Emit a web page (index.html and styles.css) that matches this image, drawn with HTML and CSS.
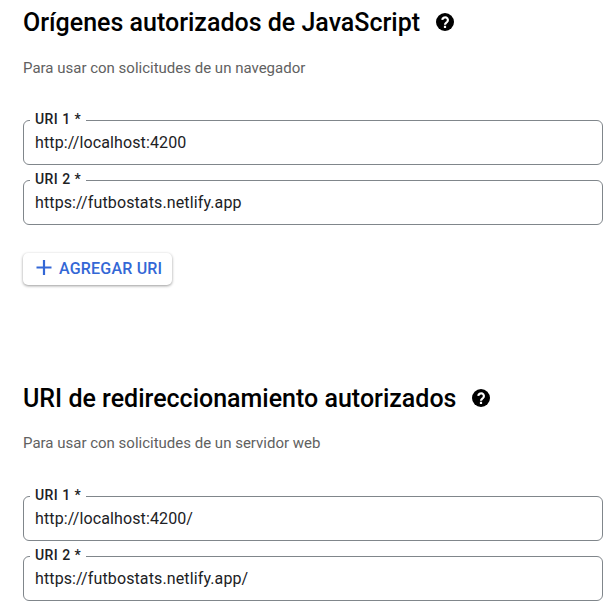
FILE: index.html
```html
<!DOCTYPE html>
<html lang="es">
<head>
<meta charset="utf-8">
<title>Credenciales</title>
<link rel="stylesheet" href="styles.css">
</head>
<body>
<section class="block">
  <h2 class="title"><span>Orígenes autorizados de JavaScript</span>
    <svg class="help" viewBox="0 0 18 18"><circle cx="9" cy="9" r="9"/><path d="M6.3 6.9a2.8 2.7 0 1 1 4.7 2.1C9.8 10 9 10.2 9 11.7M9 12.8v2.2"/></svg>
  </h2>
  <p class="hint">Para usar con solicitudes de un navegador</p>
  <fieldset class="field"><legend><span>URI 1 *</span></legend><div class="value">http://localhost:4200</div></fieldset>
  <fieldset class="field"><legend><span>URI 2 *</span></legend><div class="value">https://futbostats.netlify.app</div></fieldset>
  <button class="add"><svg class="plus" viewBox="0 0 16 16"><path d="M8 0v15M.5 7.5h15"/></svg><span>AGREGAR URI</span></button>
</section>
<section class="block redirects">
  <h2 class="title"><span>URI de redireccionamiento autorizados</span>
    <svg class="help" viewBox="0 0 18 18"><circle cx="9" cy="9" r="9"/><path d="M6.3 6.9a2.8 2.7 0 1 1 4.7 2.1C9.8 10 9 10.2 9 11.7M9 12.8v2.2"/></svg>
  </h2>
  <p class="hint">Para usar con solicitudes de un servidor web</p>
  <fieldset class="field"><legend><span>URI 1 *</span></legend><div class="value">http://localhost:4200/</div></fieldset>
  <fieldset class="field"><legend><span>URI 2 *</span></legend><div class="value">https://futbostats.netlify.app/</div></fieldset>
</section>
</body>
</html>
```
FILE: styles.css
```css
* { box-sizing: border-box; }
body {
  margin: 0;
  height: 615px;
  overflow: hidden;
  background: #fff;
  font-family: Roboto, sans-serif;
  color: #202124;
}
.block {
  height: 376px;
  padding: 6px 12px 0 23px;
}
.redirects { height: 239px; }
.title {
  display: flex;
  align-items: center;
  gap: 16px;
  margin: 0;
  height: 32px;
  font-size: 25px;
  font-weight: 500;
  line-height: 32px;
  color: #000;
  white-space: nowrap;
}
.title span { padding-top: 2px; }
.help { width: 18px; height: 18px; }
.help path { fill: none; stroke: #fff; stroke-width: 2.2; }
.hint {
  margin: 20px 0 33px;
  font-size: 15px;
  line-height: 20px;
  color: #616161;
}
.redirects .hint { margin: 19px 0 34px; }
.field {
  height: 54px;
  min-width: 0;
  margin: 0 0 6px;
  padding: 0 11px;
  border: 1px solid #80868b;
  border-radius: 6px;
  font-size: 16px;
  line-height: 20px;
}
.field legend {
  height: 18px;
  margin-left: -5px;
  padding: 0 5px;
  font-size: 14px;
  font-weight: 500;
  line-height: 16px;
  letter-spacing: .45px;
}
.value { margin-top: 4px; letter-spacing: .12px; }
.add {
  display: flex;
  align-items: center;
  gap: 7px;
  width: 149px;
  height: 32px;
  margin-top: 28px;
  padding: 0 0 1px 13px;
  border: 0;
  border-radius: 5px;
  background: #fff;
  box-shadow: 0 1px 3px rgba(0,0,0,.4);
  color: #3367d6;
  font: 500 16px/30px Roboto, sans-serif;
  letter-spacing: .2px;
  white-space: nowrap;
}
.plus { width: 16px; height: 16px; margin-bottom: 1px; }
.plus path { stroke: currentColor; stroke-width: 2.2; }
```
